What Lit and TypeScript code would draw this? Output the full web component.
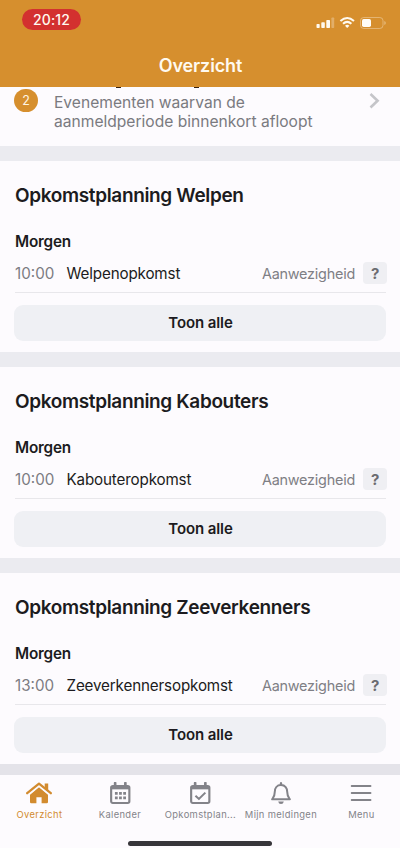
import { LitElement, html, css, svg } from "lit";
import { customElement, property } from "lit/decorators.js";

@customElement("status-header")
class StatusHeader extends LitElement {
  static styles = css`
    :host { display: flex; flex-direction: column; height: 87px; flex: none; background: #d68f2e; color: #fffaf0; }
    .status { display: flex; justify-content: space-between; height: 44px; padding: 9px 14px 0 22px; box-sizing: border-box; }
    .time { width: 59px; height: 21px; border-radius: 11px; background: #d3312f; text-align: center; font-size: 14px; font-weight: 500; line-height: 21px; letter-spacing: 0.1px; }
    .icons { display: block; margin-top: 7px; }
    .title { text-align: center; font-size: 18px; font-weight: 600; line-height: 22px; margin-top: 11px; padding-left: 1px; letter-spacing: -0.15px; }
  `;
  render() {
    return html`
      <div class="status">
        <div class="time">20:12</div>
        <svg class="icons" width="70" height="14" viewBox="0 0 70 14">
          <g fill="#fffaf0">
            <rect x="0.5" y="8" width="3.2" height="4" rx=".7" />
            <rect x="5.3" y="6.3" width="3.5" height="5.7" rx=".7" />
            <rect x="10.3" y="4" width="3.7" height="8" rx=".7" />
            <rect x="15.4" y="1.5" width="2.8" height="10.5" rx=".7" opacity=".3" />
          </g>
          <g fill="none" stroke="#fffaf0" stroke-width="2">
            <path d="M24.4 5Q31.2-1 38 5" />
            <path d="M27 7.8Q31.2 4 35.4 7.8" />
          </g>
          <path d="M31.2 12l-2.2-2.3q2.2-1.7 4.4 0z" fill="#fffaf0" />
          <rect x="44.5" y="1.5" width="22.5" height="11" rx="3.2" fill="none" stroke="#fffaf0" stroke-opacity=".35" />
          <path d="M68.3 5v4q1.5-.6 1.5-2t-1.5-2z" fill="#fffaf0" opacity=".4" />
          <rect x="46" y="3" width="9" height="8" rx="1.7" fill="#fffdf8" />
        </svg>
      </div>
      <div class="title">Overzicht</div>
    `;
  }
}

@customElement("notice-row")
class NoticeRow extends LitElement {
  static styles = css`
    :host { display: flex; position: relative; flex: none; height: 59px; box-sizing: border-box; padding: 2px 20px 0 14px; background: #fdfbfe; }
    .count { width: 24px; height: 23px; border-radius: 12px; background: #d68f2e; color: #fff5e2; font-size: 12.5px; line-height: 23px; text-align: center; }
    .text { flex: 1; margin: 4px 0 0 16px; font-size: 15.6px; line-height: 19px; color: #7a7a80; letter-spacing: 0; }
    .chevron { display: block; margin-top: 3px; }
    .tail { position: absolute; top: 0; width: 5px; height: 1px; background: #37210f; }
    .first { left: 116px; }
    .second { left: 194px; }
  `;
  render() {
    return html`
      <span class="tail first"></span><span class="tail second"></span>
      <div class="count">2</div>
      <div class="text">Evenementen waarvan de<br />aanmeldperiode binnenkort afloopt</div>
      <svg class="chevron" width="11" height="18" viewBox="0 0 11 18">
        <path d="M1.5 2L8.6 8.7L1.5 15.5" fill="none" stroke="#c5c5c9" stroke-width="2.6" />
      </svg>
    `;
  }
}

@customElement("planning-card")
class PlanningCard extends LitElement {
  @property() group = "";
  @property() time = "";
  @property() event = "";
  static styles = css`
    :host { display: block; flex: none; height: 191px; box-sizing: border-box; padding: 22px 14px 0; background: #fdfbfe; color: #1c1b20; }
    .heading { margin-left: 1px; font-size: 19px; font-weight: 600; line-height: 26px; white-space: nowrap; letter-spacing: -0.35px; }
    .day { margin: 23px 0 0 1px; font-size: 15.3px; font-weight: 600; line-height: 20px; letter-spacing: -0.2px; }
    .row { display: flex; align-items: center; height: 40px; margin: 1px 0 0 1px; border-bottom: 1px solid #e8e7eb; box-sizing: border-box; font-size: 15.2px; letter-spacing: -0.15px; padding-top: 1px; }
    .time { width: 51.5px; color: #7c7c82; letter-spacing: 0; }
    .event { flex: 1; white-space: nowrap; }
    .presence { color: #7f7f85; font-size: 14.4px; letter-spacing: -0.22px; margin: 1px 8px 0 0; }
    .mark { width: 24px; height: 22px; margin-right: -1px; border-radius: 4px; background: #efeff3; color: #6b6b70; text-align: center; font-size: 15px; font-weight: 700; line-height: 24px; }
    .all { height: 36px; margin-top: 12px; border-radius: 9px; background: #eff0f4; text-align: center; font-size: 15px; font-weight: 600; line-height: 36px; letter-spacing: -0.1px; padding-left: 1px; }
  `;
  render() {
    return html`
      <div class="heading">Opkomstplanning ${this.group}</div>
      <div class="day">Morgen</div>
      <div class="row">
        <span class="time">${this.time}</span>
        <span class="event">${this.event}</span>
        <span class="presence">Aanwezigheid</span>
        <span class="mark">?</span>
      </div>
      <div class="all">Toon alle</div>
    `;
  }
}

const calendar = svg`
  <path d="M6 4.5V1M16 4.5V1" stroke="currentColor" stroke-width="2.6" stroke-linecap="round" />
  <rect x="2.1" y="4.1" width="17.8" height="17.3" rx="1.6" fill="none" stroke="currentColor" stroke-width="2.1" />
  <path d="M2 4.5h18v3H2z" fill="currentColor" />`;

const icons = {
  home: svg`
    <path d="M4 12.8L13 5.2l9 7.6V20q0 1.3-1.3 1.3h-5.1v-6h-5.2v6H5.3Q4 21.3 4 20z" fill="currentColor" />
    <path d="M1.3 12L13 2.2L24.7 12" fill="none" stroke="#fdfbfe" stroke-width="4" />
    <path d="M1.2 11.2L13 1.7l11.8 9.5" fill="none" stroke="currentColor" stroke-width="2.3" stroke-linecap="round" stroke-linejoin="round" />
    <path d="M18.7 1.5h3.5v8l-3.5-3z" fill="currentColor" />`,
  calendar: svg`${calendar}
    <path d="M5.8 11.7h10.8M5.8 16.2h10.8" stroke="currentColor" stroke-width="2.7" stroke-dasharray="2.7 1.35" />`,
  check: svg`${calendar}
    <path d="M6.3 14l3.4 3.3l6.3-6.4" fill="none" stroke="currentColor" stroke-width="2" />`,
  bell: svg`
    <path d="M11 3.1C6.8 3.1 4.8 6.2 4.8 9.7C4.8 14 3.4 15.3 2.1 17.3H19.9C18.6 15.3 17.2 14 17.2 9.7C17.2 6.2 15.2 3.1 11 3.1z" fill="none" stroke="currentColor" stroke-width="2" stroke-linejoin="round" />
    <path d="M11 3V1.2" stroke="currentColor" stroke-width="2.2" stroke-linecap="round" />
    <path d="M8.2 19.5h5.6q-.4 2.5-2.8 2.5t-2.8-2.5z" fill="currentColor" />`,
  menu: svg`<path d="M1.7 4h18.8M1.7 11h18.8M1.7 18h18.8" stroke="currentColor" stroke-width="1.9" stroke-linecap="round" />`,
};

@customElement("tab-bar")
class TabBar extends LitElement {
  static styles = css`
    :host { display: flex; flex-direction: column; flex: none; height: 73px; margin-top: auto; background: #fdfbfe; }
    .tabs { display: grid; grid-template-columns: repeat(5, 80.5px); margin-left: -0.8px; flex: none; height: 66px; }
    .tab { display: flex; flex-direction: column; align-items: center; padding-top: 7px; color: #838389; font-size: 9.4px; line-height: 13px; letter-spacing: 0.34px; white-space: nowrap; }
    .tab svg { display: block; margin-bottom: 4px; }
    .active { color: #d28b2f; }
    .handle { width: 144px; height: 5px; border-radius: 3px; background: #37363a; align-self: center; }
  `;
  render() {
    return html`
      <div class="tabs">
        <div class="tab active"><svg width="26" height="22" viewBox="0 0 26 22">${icons.home}</svg>Overzicht</div>
        <div class="tab"><svg width="22.5" height="22" viewBox="0 0 22 22.5" preserveAspectRatio="none">${icons.calendar}</svg>Kalender</div>
        <div class="tab"><svg width="22.5" height="22" viewBox="0 0 22 22.5" preserveAspectRatio="none">${icons.check}</svg>Opkomstplan...</div>
        <div class="tab"><svg width="22" height="22" viewBox="0 0 22 22">${icons.bell}</svg>Mijn meldingen</div>
        <div class="tab"><svg width="22" height="22" viewBox="0 0 22 22">${icons.menu}</svg>Menu</div>
      </div>
      <div class="handle"></div>
    `;
  }
}

@customElement("app-root")
class AppRoot extends LitElement {
  static styles = css`
    :host { display: flex; flex-direction: column; width: 400px; height: 848px; overflow: hidden; background: #ebebf0; font-family: Inter, "Liberation Sans", sans-serif; }
    .cards { display: flex; flex-direction: column; gap: 15px; margin-top: 15px; }
    .edge { flex: 1; background: #e4e3e9; }
  `;
  render() {
    return html`
      <status-header></status-header>
      <notice-row></notice-row>
      <div class="cards">
        <planning-card group="Welpen" time="10:00" event="Welpenopkomst"></planning-card>
        <planning-card group="Kabouters" time="10:00" event="Kabouteropkomst"></planning-card>
        <planning-card group="Zeeverkenners" time="13:00" event="Zeeverkennersopkomst"></planning-card>
      </div>
      <div class="edge"></div>
      <tab-bar></tab-bar>
    `;
  }
}
